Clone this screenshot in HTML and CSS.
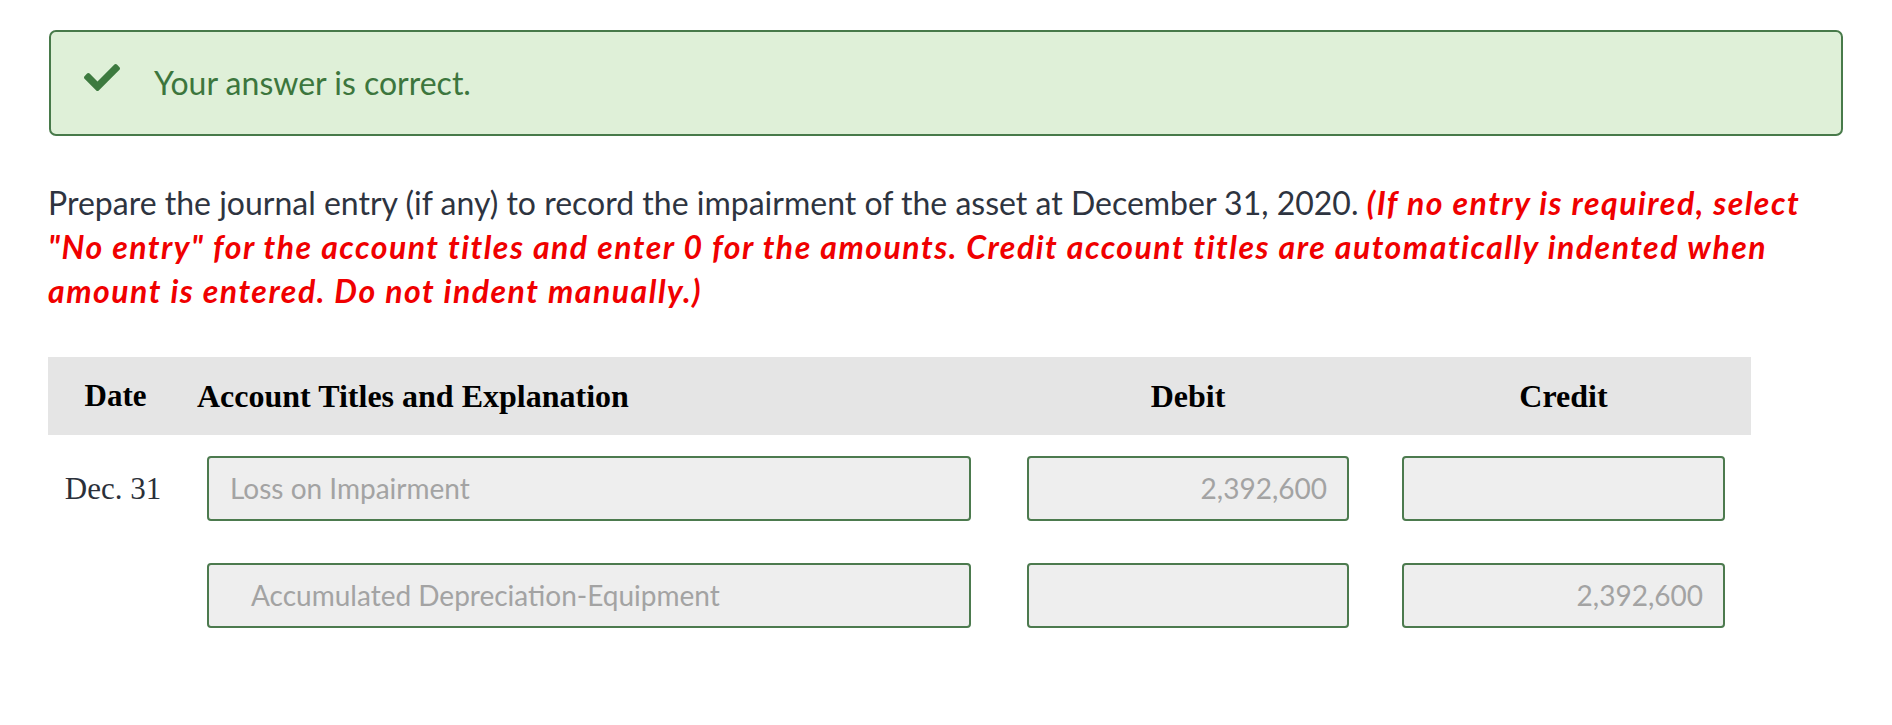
FILE: index.html
```html
<!DOCTYPE html>
<html lang="en">
<head>
<meta charset="utf-8">
<title>Journal entry</title>
<link rel="stylesheet" href="styles.css">
</head>
<body>
<div class="page">
  <div class="alert">
    <svg class="check" viewBox="0 0 512 384" aria-hidden="true">
      <path d="M173.898 375.404l-166.4-166.4c-9.997-9.997-9.997-26.206 0-36.204l36.203-36.204c9.997-9.998 26.207-9.998 36.204 0L192 248.69 432.095 8.596c9.997-9.997 26.207-9.997 36.204 0l36.203 36.204c9.997 9.997 9.997 26.206 0 36.204l-294.4 294.401c-9.998 9.997-26.207 9.997-36.204-.001z"/>
    </svg>
    <span class="alert-text">Your answer is correct.</span>
  </div>

  <p class="question">Prepare the journal entry (if any) to record the impairment of the asset at December 31, 2020. <em class="hint">(If no entry is required, select "No entry" for the account titles and enter 0 for the amounts. Credit account titles are automatically indented when amount is entered. Do not indent manually.)</em></p>

  <div class="journal">
    <div class="jhead">
      <div class="hcell hdate">Date</div>
      <div class="hcell hacct">Account Titles and Explanation</div>
      <div class="hcell hnum hdebit">Debit</div>
      <div class="hcell hnum hcredit">Credit</div>
    </div>
    <div class="jrow">
      <div class="cdate">Dec. 31</div>
      <div class="cacct"><div class="field">Loss on Impairment</div></div>
      <div class="cdebit"><div class="field num">2,392,600</div></div>
      <div class="ccredit"><div class="field num"></div></div>
    </div>
    <div class="jrow">
      <div class="cdate"></div>
      <div class="cacct"><div class="field indent">Accumulated Depreciation-Equipment</div></div>
      <div class="cdebit"><div class="field num"></div></div>
      <div class="ccredit"><div class="field num">2,392,600</div></div>
    </div>
  </div>
</div>
</body>
</html>
```

FILE: styles.css
```css
html, body {
  margin: 0;
  padding: 0;
  background: #ffffff;
}

.page {
  padding: 30px 49px 0 48px;
  font-family: Lato, "Open Sans", sans-serif;
}

.alert {
  margin-left: 1px;
  height: 106px;
  box-sizing: border-box;
  border: 2px solid #487a4a;
  border-radius: 7px;
  background: #dff0d8;
  display: flex;
  align-items: center;
  padding-left: 33px;
}

.check {
  width: 36px;
  height: 27px;
  fill: #3d7a3f;
  margin-right: 34px;
  margin-top: -12px;
}

.alert-text {
  color: #3c763d;
  font-size: 32px;
  margin-top: -2px;
}

.question {
  margin: 45px 0 0 0;
  font-size: 32px;
  line-height: 44px;
  color: #2e3440;
}

.hint {
  color: #f00000;
  font-weight: bold;
  font-style: italic;
  letter-spacing: 1.5px;
}

.journal {
  width: 1703px;
  margin-top: 44px;
}

.jhead {
  display: grid;
  grid-template-columns: 130px 793px 378px 376px;
  background: #e5e5e5;
  height: 78px;
  align-items: center;
  font-family: "Liberation Serif", "Times New Roman", serif;
  font-weight: bold;
  font-size: 32px;
  color: #000;
}

.hdate {
  text-align: center;
  padding-left: 5px;
  font-size: 31px;
}

.hacct {
  padding-left: 19px;
}

.hdebit {
  padding-left: 56px;
  text-align: center;
}

.hcredit {
  padding-left: 53px;
  text-align: center;
}

.jrow {
  display: grid;
  grid-template-columns: 130px 793px 378px 376px;
  align-items: center;
  margin-top: 21px;
}

.jrow + .jrow {
  margin-top: 42px;
}

.cdate {
  text-align: center;
  font-family: "Liberation Serif", "Times New Roman", serif;
  font-size: 31px;
  color: #2b303a;
}

.cacct {
  padding-left: 29px;
}

.cdebit {
  padding-left: 56px;
}

.ccredit {
  padding-left: 53px;
}

.field {
  box-sizing: border-box;
  height: 65px;
  border: 2px solid #4c7a4e;
  border-radius: 4px;
  background: #eeeeee;
  color: #a3a3a3;
  font-size: 28px;
  line-height: 61px;
  padding: 0 21px;
  white-space: nowrap;
}

.field.indent {
  padding-left: 42px;
}

.field.num {
  text-align: right;
  padding-right: 20px;
}
```
